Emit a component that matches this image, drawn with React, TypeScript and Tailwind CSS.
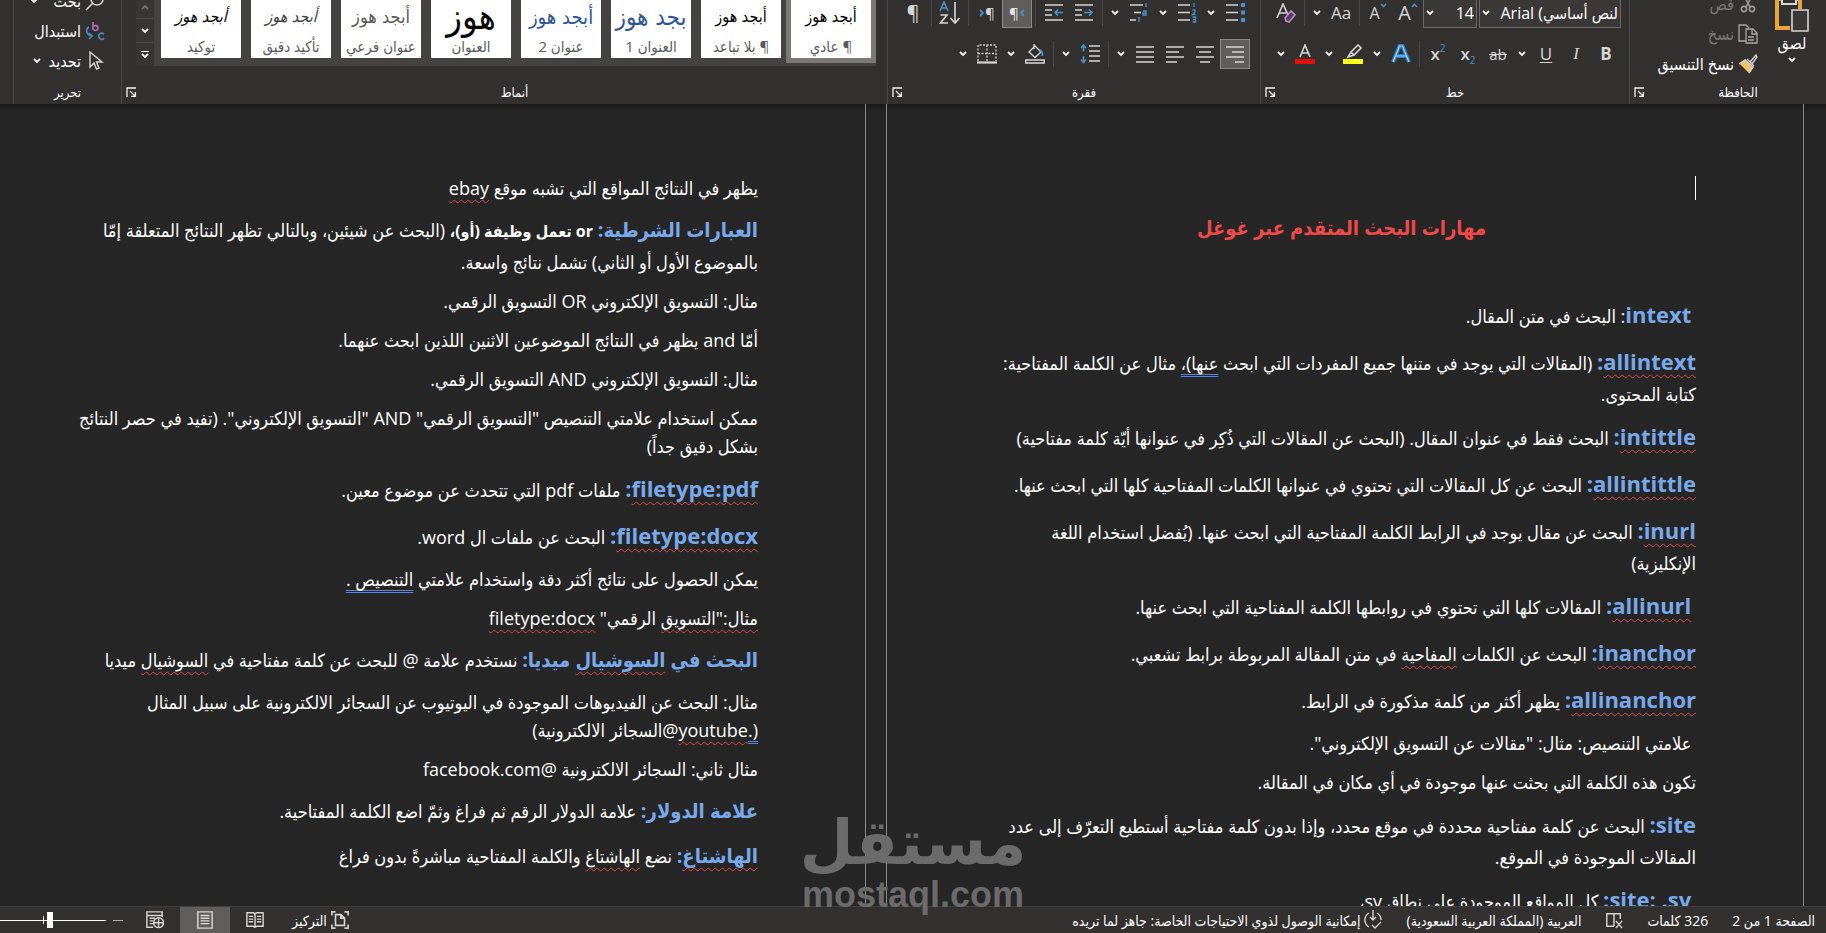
import type { ReactNode } from 'react'

const ui = 'font-["Open_Sans","DejaVu_Sans_Condensed",sans-serif]'

function Chevron({ className = '' }: { className?: string }) {
  return (
    <svg width="8" height="6" viewBox="0 0 8 6" fill="none" stroke="#f3f3f3" strokeWidth="1.8" className={`shrink-0 ${className}`}>
      <path d="M1 1l3 3 3-3" />
    </svg>
  )
}

function Drop({ label }: { label: string }) {
  return (
    <button aria-label={label} className="flex h-[30px] w-[18px] items-center justify-center">
      <Chevron />
    </button>
  )
}

function Tool({ label, active, children }: { label: string; active?: boolean; children: ReactNode }) {
  return (
    <button
      aria-label={label}
      className={
        active
          ? 'flex h-[30px] w-[30px] items-center justify-center border border-[#8a8a8a] bg-[#5f5e5c]'
          : 'flex h-[30px] w-[30px] items-center justify-center'
      }
    >
      {children}
    </button>
  )
}

function Sep() {
  return <div className="mx-[3px] h-[26px] w-px bg-[#4a4947]" />
}

function Svg({ children, size = 20 }: { children: ReactNode; size?: number }) {
  return (
    <svg width={size} height={size} viewBox="0 0 20 20" fill="none" stroke="#d6d6d6" strokeWidth="1.6" className="shrink-0">
      {children}
    </svg>
  )
}

function GroupFooter({ title, launcher = true }: { title: string; launcher?: boolean }) {
  return (
    <div dir="ltr" className="mb-[2px] flex h-5 shrink-0 items-center">
      {launcher && (
        <button aria-label={`خيارات ${title}`} className="w-5 px-1">
          <svg width="11" height="11" viewBox="0 0 11 11" fill="none" stroke="#f3f3f3" strokeWidth="1.3">
            <path d="M1 10V1h9M4 4l5 5M9.4 5v4.4H5" />
          </svg>
        </button>
      )}
      <span className="flex-1 text-center text-[13px] leading-5 text-white">{title}</span>
    </div>
  )
}

const alignIcons = {
  right: 'M1 3h18M7 8h12M1 13h18M10 18h9',
  center: 'M1 3h18M4 8h12M1 13h18M5 18h10',
  left: 'M1 3h18M1 8h13M1 13h18M1 18h11',
  justify: 'M1 3h18M1 8h18M1 13h18M1 18h18',
}

function AlignIcon({ kind }: { kind: keyof typeof alignIcons }) {
  return (
    <Svg>
      <path d={alignIcons[kind]} />
    </Svg>
  )
}

function Clipboard() {
  return (
    <section className="flex w-[197px] flex-col justify-end border-l border-[#4a4947]">
      <div className="flex shrink-0 items-end gap-4 pr-4 pb-[3px]">
        <button className="flex flex-col items-center text-[16px] leading-5 text-white">
          <svg width="36" height="40" viewBox="0 0 36 40" fill="none">
            <path d="M3 4v31h13M26 4v12" stroke="#e8a33d" strokeWidth="4" />
            <path d="M3 6h23" stroke="#e8a33d" strokeWidth="4" />
            <path d="M8 2h14v9H8z" fill="#323130" stroke="#d6d6d6" strokeWidth="2" />
            <path d="M18 17h16v21H18z" fill="#3b3a39" stroke="#d6d6d6" strokeWidth="1.6" />
          </svg>
          لصق
          <Chevron className="mt-1 mb-4" />
        </button>
        <div className="flex flex-col text-[16px] whitespace-nowrap">
          <button className="flex h-[30px] items-center gap-1 text-[#7b7a78]">
            <Svg>
              <path d="M5 0l7 13M15 0L8 13" stroke="#9a9a9a" />
              <circle cx="6" cy="15" r="2.6" stroke="#9a9a9a" />
              <circle cx="14" cy="15" r="2.6" stroke="#9a9a9a" />
            </Svg>
            قص
          </button>
          <button className="flex h-[30px] items-center gap-1 text-[#7b7a78]">
            <Svg>
              <path d="M8 17H1V1h7l3 3M8 5h7l4 4v10H8zM14 5v5h5M10 13h6M10 16h6" stroke="#a8a8a8" strokeWidth="1.3" />
            </Svg>
            نسخ
          </button>
          <button className="flex h-[30px] items-center gap-1 text-white">
            <Svg>
              <path d="M3 10l8 8 3-4-7-7z" fill="#f0c36a" stroke="#f0c36a" />
              <path d="M1 10l6-4 8 7-4 6M9 5l7 7M12 8l6-7 1 2-5 7" strokeWidth="1.4" />
            </Svg>
            نسخ التنسيق
          </button>
        </div>
      </div>
      <GroupFooter title="الحافظة" />
    </section>
  )
}

function FontGroup() {
  return (
    <section className="flex w-[369px] flex-col justify-end border-l border-[#4a4947]">
      <div dir="ltr" className="flex shrink-0 flex-col gap-[11px] pr-2 pb-[13px]">
        <div className="flex h-[30px] items-center justify-end">
          <Tool label="مسح التنسيق">
            <Svg>
              <path d="M1 15L7 1l5 11M3 10h7" />
              <path d="M9 15l6-7 4 4-6 7-3-1z" fill="#5d3a63" stroke="#c08ac9" />
            </Svg>
          </Tool>
          <Sep />
          <Drop label="خيارات حالة الأحرف" />
          <Tool label="تغيير حالة الأحرف">
            <span className="text-[17px] text-[#d6d6d6]">Aa</span>
          </Tool>
          <Sep />
          <Tool label="تصغير الخط">
            <span className="text-[16px] text-[#d6d6d6]">A</span>
            <svg width="7" height="5" viewBox="0 0 7 5" fill="none" stroke="#4a90c8" strokeWidth="1.6" className="mb-4">
              <path d="M1 1l2.500 2.500L6 1" />
            </svg>
          </Tool>
          <Tool label="تكبير الخط">
            <span className="text-[20px] text-[#d6d6d6]">A</span>
            <svg width="7" height="5" viewBox="0 0 7 5" fill="none" stroke="#4a90c8" strokeWidth="1.6" className="mb-4">
              <path d="M1 4l2.500-2.500L6 4" />
            </svg>
          </Tool>
          <div className="flex h-[30px] w-[54px] items-center border border-[#6b6a68] bg-[#3a3938] px-[2px]">
            <Chevron />
            <select aria-label="حجم الخط" className="min-w-0 flex-1 appearance-none text-right text-[16px] text-white">
              <option>14</option>
            </select>
          </div>
          <div className="ml-[2px] flex h-[30px] w-[142px] items-center border border-[#6b6a68] bg-[#3a3938] px-[2px]">
            <Chevron />
            <select aria-label="الخط" className="min-w-0 flex-1 appearance-none text-right text-[16px] text-white">
              <option>Arial (لنص أساسي</option>
            </select>
          </div>
        </div>
        <div className="flex h-[30px] items-center justify-end text-[17px] text-[#d6d6d6]">
          <Drop label="ألوان الخط" />
          <Tool label="لون الخط">
            <Svg>
              <path d="M5 13l5-12 5 12M7 9h6" />
              <path d="M0 17.500h20" stroke="#e01010" strokeWidth="5" />
            </Svg>
          </Tool>
          <Drop label="ألوان التمييز" />
          <Tool label="لون تمييز النص">
            <Svg>
              <path d="M8 8l7-7 3 3-7 7zM8 8l-3 5 6-2" />
              <path d="M0 17.500h20" stroke="#ffff1e" strokeWidth="5" />
            </Svg>
          </Tool>
          <Drop label="خيارات التأثيرات" />
          <Tool label="تأثيرات النص">
            <Svg>
              <path d="M2 18L8.500 2h3L18 18M5 12h10" stroke="#2f7fc4" strokeWidth="4" />
              <path d="M2 18L8.500 2h3L18 18M5 12h10" stroke="#a6d0f2" strokeWidth="1.2" />
            </Svg>
          </Tool>
          <Sep />
          <Tool label="مرتفع">
            <span className="font-semibold">x</span>
            <span className="mb-3 text-[10px] text-[#4a90c8]">2</span>
          </Tool>
          <Tool label="منخفض">
            <span className="font-semibold">x</span>
            <span className="mt-3 text-[10px] text-[#4a90c8]">2</span>
          </Tool>
          <Tool label="يتوسطه خط">
            <span className="text-[15px] line-through">ab</span>
          </Tool>
          <Drop label="أنماط التسطير" />
          <Tool label="تسطير">
            <span className="underline underline-offset-2">U</span>
          </Tool>
          <Tool label="مائل">
            <span className="font-['Liberation_Serif',serif] italic">I</span>
          </Tool>
          <Tool label="غامق">
            <span className="font-bold">B</span>
          </Tool>
        </div>
      </div>
      <GroupFooter title="خط" />
    </section>
  )
}

function ParagraphGroup() {
  return (
    <section className="flex w-[373px] flex-col justify-end border-l border-[#4a4947]">
      <div dir="ltr" className="flex shrink-0 flex-col gap-[11px] pr-[10px] pb-[13px]">
        <div className="flex h-[30px] items-center justify-end">
          <Tool label="إظهار علامات الفقرات">
            <span className="text-[20px] text-[#d6d6d6]">¶</span>
          </Tool>
          <Sep />
          <Tool label="فرز">
            <svg width="22" height="24" viewBox="0 0 22 24" fill="none" stroke="#d6d6d6" strokeWidth="1.6">
              <path d="M1 10L5 1l4 9M2.500 7h5" stroke="#4a90c8" />
              <path d="M1.500 14h6.500L1.500 22H9M16 1v20M11.500 17l4.500 5 4.500-5" />
            </svg>
          </Tool>
          <Sep />
          <Tool label="من اليسار إلى اليمين">
            <svg width="6" height="8" viewBox="0 0 6 8" fill="none" stroke="#4a90c8" strokeWidth="1.8">
              <path d="M1 1l3 3-3 3" />
            </svg>
            <span className="text-[15px] text-[#d6d6d6]">¶</span>
          </Tool>
          <Tool label="من اليمين إلى اليسار" active>
            <span className="text-[15px] text-[#e6e6e6]">¶</span>
            <svg width="6" height="8" viewBox="0 0 6 8" fill="none" stroke="#4a90c8" strokeWidth="1.8">
              <path d="M5 1L2 4l3 3" />
            </svg>
          </Tool>
          <Sep />
          <Tool label="إنقاص المسافة البادئة">
            <Svg>
              <path d="M1 2h18M1 7h7M1 12h7M1 17h18" />
              <path d="M19 9.500h-8M14 6.500l-3 3 3 3" stroke="#4a90c8" />
            </Svg>
          </Tool>
          <Tool label="زيادة المسافة البادئة">
            <Svg>
              <path d="M1 2h18M1 7h7M1 12h7M1 17h18" />
              <path d="M10 9.500h8M15 6.500l3 3-3 3" stroke="#4a90c8" />
            </Svg>
          </Tool>
          <Sep />
          <Drop label="قائمة متعددة المستويات" />
          <Tool label="متعدد المستويات">
            <Svg>
              <path d="M1 2h13M5 9.500h7M1 17h6" />
              <path d="M17 0v4M14 8h3v4h-3v-2h3M10 14v5" stroke="#4a90c8" strokeWidth="1.400" />
            </Svg>
          </Tool>
          <Drop label="أنماط الترقيم" />
          <Tool label="ترقيم">
            <Svg>
              <path d="M1 2h12M1 9.500h12M1 17h12" />
              <path d="M17 0v4M15.500 7h2.500v2l-2.500 2.500h3M15.500 14h3v5h-3M16 16.500h2" stroke="#4a90c8" strokeWidth="1.300" />
            </Svg>
          </Tool>
          <Drop label="أنماط التعداد" />
          <Tool label="تعداد نقطي">
            <Svg>
              <path d="M1 2h12M1 9.500h12M1 17h12" />
              <path d="M16 0h4v4h-4zM16 7.500h4v4h-4zM16 15h4v4h-4z" fill="#4a90c8" stroke="none" />
            </Svg>
          </Tool>
        </div>
        <div className="flex h-[30px] items-center justify-end">
          <Drop label="أنماط الحدود" />
          <Tool label="حدود">
            <Svg>
              <path d="M1 17V1h18v16M10 1v16M1 9.500h18" strokeDasharray="2 1.500" strokeWidth="1.300" />
              <path d="M0 18.500h20" strokeWidth="2.200" />
            </Svg>
          </Tool>
          <Drop label="ألوان التظليل" />
          <Tool label="تظليل">
            <Svg>
              <path d="M4 8l6-6 6 6-6 5.500zM9 0v5M0.800 16h18.400v3H0.800z" strokeWidth="1.400" />
              <path d="M15 6c2 1 2.500 3 2.500 6" stroke="#4a90c8" strokeWidth="2" />
            </Svg>
          </Tool>
          <Sep />
          <Drop label="خيارات التباعد" />
          <Tool label="تباعد الأسطر">
            <Svg>
              <path d="M9 2h11M9 7h11M9 12h11M9 17h11" />
              <path d="M3.500 1.500v6M1 4l2.500-3L6 4M3.500 18v-6M1 15.500l2.500 3 2.500-3" stroke="#4a90c8" />
            </Svg>
          </Tool>
          <Sep />
          <Drop label="خيارات الضبط" />
          <Tool label="ضبط">
            <AlignIcon kind="justify" />
          </Tool>
          <Tool label="محاذاة إلى اليسار">
            <AlignIcon kind="left" />
          </Tool>
          <Tool label="توسيط">
            <AlignIcon kind="center" />
          </Tool>
          <Tool label="محاذاة إلى اليمين" active>
            <AlignIcon kind="right" />
          </Tool>
        </div>
      </div>
      <GroupFooter title="فقرة" />
    </section>
  )
}

const styleCards = [
  { name: '¶ عادي', sample: 'أبجد هوز', look: 'text-[16px] text-black', selected: true },
  { name: '¶ بلا تباعد', sample: 'أبجد هوز', look: 'text-[16px] text-black' },
  { name: 'العنوان 1', sample: 'بجد هوز', look: 'text-[24px] text-[#2f5496]' },
  { name: 'عنوان 2', sample: 'أبجد هوز', look: 'text-[20px] text-[#2f5496]' },
  { name: 'العنوان', sample: 'هوز', look: 'text-[36px] text-black' },
  { name: 'عنوان فرعي', sample: 'أبجد هوز', look: 'text-[18px] text-[#5a5a5a]' },
  { name: 'تأكيد دقيق', sample: 'أبجد هوز', look: 'text-[16px] italic text-[#404040]' },
  { name: 'توكيد', sample: 'أبجد هوز', look: 'text-[16px] italic text-black' },
]

function StylesGroup() {
  return (
    <section className="flex min-w-0 flex-1 flex-col justify-end border-l border-[#4a4947]">
      <div className="mr-[11px] mb-4 ml-[14px] flex h-[70px] shrink-0 bg-[#444342]">
        <div className="flex flex-1 items-end pb-[3px]">
          {styleCards.map((card) => (
            <button
              key={card.name}
              className={
                card.selected
                  ? 'flex h-[70px] w-[90px] flex-col border-[5px] border-[#7a7978] bg-white'
                  : 'flex h-[70px] w-[90px] flex-col border-[5px] border-transparent bg-white bg-clip-padding'
              }
            >
              <span
                className={`flex h-[38px] w-full items-center justify-center font-["DejaVu_Sans_Condensed",sans-serif] leading-none whitespace-nowrap ${card.look}`}
              >
                {card.sample}
              </span>
              <span className="h-[22px] w-full text-center text-[15px] leading-5 whitespace-nowrap text-[#5a5a5a]">
                {card.name}
              </span>
            </button>
          ))}
        </div>
        <div className="flex w-[18px] flex-col justify-end gap-px bg-[#4a4947]">
          <button aria-label="السابق" className="flex h-[22px] items-center justify-center bg-[#373635]">
            <Chevron className="rotate-180 opacity-30" />
          </button>
          <button aria-label="التالي" className="flex h-[23px] items-center justify-center bg-[#373635]">
            <Chevron />
          </button>
          <button aria-label="المزيد" className="flex h-[23px] flex-col items-center justify-center gap-px bg-[#373635]">
            <span className="h-px w-2 bg-white" />
            <Chevron />
          </button>
        </div>
      </div>
      <GroupFooter title="أنماط" />
    </section>
  )
}

function EditingGroup() {
  return (
    <section className="flex w-[108px] flex-col justify-end border-l border-[#4a4947]">
      <div className="flex shrink-0 flex-col pr-4 pb-[6px] text-[16px] whitespace-nowrap text-white">
        <button className="flex h-[30px] items-center gap-1">
          <Svg>
            <circle cx="12" cy="8" r="6" />
            <path d="M8 12l-7 7" />
          </Svg>
          بحث
          <Chevron className="mr-3" />
        </button>
        <button className="flex h-[30px] items-center gap-1">
          <Svg>
            <path d="M8 1v8M8 6c1-2 5-2 5 1s-4 3-5 1" stroke="#b06fbc" />
            <path d="M19 13c-3-2-6 0-5 3s4 3 5 1M4 6c-4 2-3 8 3 9M4 12l3 3-3 3" stroke="#4a90c8" />
          </Svg>
          استبدال
        </button>
        <button className="flex h-[30px] items-center gap-1">
          <Svg>
            <path d="M5 1v15l4-4 2.500 6 2.500-1-2.500-6H17z" strokeWidth="1.400" />
          </Svg>
          تحديد
          <Chevron className="mr-1" />
        </button>
      </div>
      <GroupFooter title="تحرير" launcher={false} />
    </section>
  )
}

function Line({ big, children }: { big?: boolean; children: ReactNode }) {
  return <span className={big ? 'block leading-[34px] whitespace-nowrap' : 'block leading-[28px] whitespace-nowrap'}>{children}</span>
}

function Key({ children }: { children: ReactNode }) {
  return <strong className="text-[22px] font-bold text-[#78a9ea]">{children}</strong>
}

function ArabicKey({ children }: { children: ReactNode }) {
  return <strong className="text-[20px] font-bold text-[#78a9ea]">{children}</strong>
}

function Spell({ children }: { children: ReactNode }) {
  return (
    <span className="underline decoration-[#d9484a] decoration-wavy decoration-1 underline-offset-4 [text-decoration-skip-ink:none]">
      {children}
    </span>
  )
}

function Grammar({ children }: { children: ReactNode }) {
  return (
    <span className="underline decoration-[#5b84e0] decoration-double decoration-1 underline-offset-4 [text-decoration-skip-ink:none]">
      {children}
    </span>
  )
}

function FirstPage() {
  return (
    <article className="w-[918px] shrink-0 border-x border-[#8a8a8a] pt-[72px] pr-[107px] pl-[100px]">
      <div className="h-6 border-r border-white" />
      <h1 className="mt-3 text-center text-[20px] leading-8 font-bold text-[#f04a4a]">مهارات البحث المتقدم عبر غوغل</h1>
      <div className="mt-[53px] flex flex-col gap-[11px]">
        <p>
          <Line big>
            &nbsp;<Key>intext</Key>: البحث في متن المقال.
          </Line>
        </p>
        <p>
          <Line big>
            <Key><Spell>allintext</Spell>:</Key> (المقالات التي يوجد في متنها جميع المفردات التي ابحث <Grammar>عنها)،</Grammar> مثال عن
            الكلمة المفتاحية:
          </Line>
          <Line>كتابة المحتوى.</Line>
        </p>
        <p>
          <Line big>
            <Key><Spell>intittle</Spell>:</Key> البحث فقط في عنوان المقال. (البحث عن المقالات التي ذُكِر في عنوانها أيّة كلمة مفتاحية)
          </Line>
        </p>
        <p>
          <Line big>
            <Key><Spell>allintittle</Spell>:</Key> البحث عن كل المقالات التي تحتوي في عنوانها الكلمات المفتاحية كلها التي ابحث عنها.
          </Line>
        </p>
        <p>
          <Line big>
            <Key><Spell>inurl</Spell>:</Key> البحث عن مقال يوجد في الرابط الكلمة المفتاحية التي ابحث عنها. (يُفضل استخدام اللغة
          </Line>
          <Line>الإنكليزية)</Line>
        </p>
        <p>
          <Line big>
            &nbsp;<Key><Spell>allinurl</Spell>:</Key> المقالات كلها التي تحتوي في روابطها الكلمة المفتاحية التي ابحث عنها.
          </Line>
        </p>
        <p>
          <Line big>
            <Key><Spell>inanchor</Spell>:</Key> البحث عن الكلمات <Spell>المفاحية</Spell> في متن المقالة المربوطة برابط تشعبي.
          </Line>
        </p>
        <p>
          <Line big>
            <Key><Spell>allinanchor</Spell>:</Key> يظهر أكثر من كلمة مذكورة في الرابط.
          </Line>
        </p>
        <p>
          <Line>&nbsp;علامتي التنصيص: مثال: "مقالات عن التسويق الإلكتروني".</Line>
        </p>
        <p>
          <Line>تكون هذه الكلمة التي بحثت عنها موجودة في أي مكان في المقالة.</Line>
        </p>
        <p>
          <Line big>
            <Key>site:</Key> البحث عن كلمة مفتاحية محددة في موقع محدد، وإذا بدون كلمة مفتاحية أستطيع التعرّف إلى عدد
          </Line>
          <Line>المقالات الموجودة في الموقع.</Line>
        </p>
        <p>
          <Line big>
            &nbsp;<Key><bdi dir="ltr">site: .sv</bdi>:</Key> كل المواقع الموجودة على نطاق sv،
          </Line>
        </p>
      </div>
    </article>
  )
}

function SecondPage() {
  return (
    <article className="flex min-w-0 flex-1 flex-col gap-[11px] border-r border-[#8a8a8a] pt-[70px] pr-[107px]">
      <p>
        <Line>
          يظهر في النتائج المواقع التي تشبه موقع <Spell>ebay</Spell>
        </Line>
      </p>
      <p>
        <Line big>
          <ArabicKey>العبارات الشرطية:</ArabicKey> <b className="text-[16px]">or تعمل وظيفة (أو)،</b> (البحث عن شيئين، وبالتالي تظهر النتائج
          المتعلقة إمّا
        </Line>
        <Line>بالموضوع الأول أو الثاني) تشمل نتائج واسعة.</Line>
      </p>
      <p>
        <Line>مثال: التسويق الإلكتروني OR التسويق الرقمي.</Line>
      </p>
      <p>
        <Line>أمّا and يظهر في النتائج الموضوعين الاثنين اللذين ابحث عنهما.</Line>
      </p>
      <p>
        <Line>مثال: التسويق الإلكتروني AND التسويق الرقمي.</Line>
      </p>
      <p>
        <Line>ممكن استخدام علامتي التنصيص "التسويق الرقمي" AND "التسويق الإلكتروني". (تفيد في حصر النتائج</Line>
        <Line>بشكل دقيق جداً)</Line>
      </p>
      <p>
        <Line big>
          <Key><Spell>filetype:pdf</Spell>:</Key> ملفات pdf التي تتحدث عن موضوع معين.
        </Line>
      </p>
      <p>
        <Line big>
          <Key><Spell>filetype:docx</Spell>:</Key> البحث عن ملفات ال word.
        </Line>
      </p>
      <p>
        <Line>
          يمكن الحصول على نتائج أكثر دقة واستخدام علامتي <Grammar>التنصيص .</Grammar>
        </Line>
      </p>
      <p>
        <Line>
          <Spell>مثال:"التسويق</Spell> الرقمي" <Spell>filetype:docx</Spell>
        </Line>
      </p>
      <p>
        <Line big>
          <ArabicKey>البحث في <Spell>السوشيال</Spell> ميديا:</ArabicKey> نستخدم علامة @ للبحث عن كلمة مفتاحية في <Spell>السوشيال</Spell>{' '}
          ميديا
        </Line>
      </p>
      <p>
        <Line>مثال: البحث عن الفيديوهات الموجودة في اليوتيوب عن السجائر الالكترونية على سبيل المثال</Line>
        <Line>
          <Grammar>(.</Grammar><Spell>youtube</Spell>@السجائر الالكترونية)
        </Line>
      </p>
      <p>
        <Line>مثال ثاني: السجائر الالكترونية @facebook.com</Line>
      </p>
      <p>
        <Line big>
          <ArabicKey>علامة الدولار:</ArabicKey> علامة الدولار الرقم ثم فراغ وثمّ اضع الكلمة المفتاحية.
        </Line>
      </p>
      <p>
        <Line big>
          <ArabicKey><Spell>الهاشتاغ</Spell>:</ArabicKey> نضع <Spell>الهاشتاغ</Spell> والكلمة المفتاحية مباشرةً بدون فراغ
        </Line>
      </p>
    </article>
  )
}

function StatusBar() {
  return (
    <footer className="flex h-[27px] shrink-0 items-center border-t border-[#41403f] bg-[#323130] pr-[11px] text-[14px] whitespace-nowrap text-white">
      <span>الصفحة 1 من 2</span>
      <span className="mr-6">326 كلمات</span>
      <button aria-label="تدقيق" className="mr-6">
        <Svg size={18}>
          <path d="M10 3v14M10 3H2v14h8M10 3h7v6M12 11l7 8M19 11l-7 8" />
        </Svg>
      </button>
      <span className="mr-6">العربية (المملكة العربية السعودية)</span>
      <button className="mr-6 flex items-center gap-[2px]">
        <Svg>
          <path d="M6 3a8 8 0 000 14M14 3a8 8 0 014 7M10 0v10M7 7l3 3 3-3M9 15l3 3 6-6" strokeWidth="1.400" />
        </Svg>
        إمكانية الوصول لذوي الاحتياجات الخاصة: جاهز لما تريده
      </button>
      <div className="mr-auto flex h-full items-center">
        <button className="flex items-center gap-1">
          <Svg size={18}>
            <path d="M1 5V1h4M15 1h4v4M1 15v4h4M15 19h4v-4M5 4h6l4 4v8H5zM11 4v4h4" strokeWidth="1.800" />
          </Svg>
          التركيز
        </button>
        <button aria-label="وضع القراءة" className="mr-3 flex h-full w-[50px] items-center justify-center">
          <Svg size={18}>
            <path d="M10 3v15M1 2h7l2 1 2-1h7v15h-7l-2 1-2-1H1zM3 6h5M3 9h5M3 12h5M12 6h5M12 9h5M12 12h5" />
          </Svg>
        </button>
        <button aria-label="تخطيط الطباعة" className="flex h-full w-[50px] items-center justify-center bg-[#5f5e5c]">
          <Svg size={18}>
            <path d="M2 1h16v18H2zM5 5h10M5 8h10M5 11h10M5 14h10" />
          </Svg>
        </button>
        <button aria-label="تخطيط ويب" className="flex h-full w-[50px] items-center justify-center">
          <Svg size={18}>
            <path d="M8 18H1V1h17v6M1 5h17M4 8h6M4 11h4M4 14h4" />
            <circle cx="14" cy="13" r="5.500" />
            <path d="M8.500 13h11M14 7.500v11" />
          </Svg>
        </button>
        <button aria-label="تصغير" className="flex h-full w-6 items-center justify-center">
          <span className="h-px w-[10px] bg-[#b0b0b0]" />
        </button>
        <input
          type="range"
          dir="ltr"
          aria-label="تكبير أو تصغير"
          defaultValue={47}
          className="h-4 w-[106px] appearance-none bg-[linear-gradient(white,white),linear-gradient(white,white)] bg-[length:100%_1px,1px_8px] bg-[position:center,43px_center] bg-no-repeat [&::-webkit-slider-thumb]:h-4 [&::-webkit-slider-thumb]:w-[6px] [&::-webkit-slider-thumb]:appearance-none [&::-webkit-slider-thumb]:bg-white"
        />
      </div>
    </footer>
  )
}

export default function App() {
  return (
    <div dir="rtl" className={`relative flex h-screen flex-col overflow-hidden bg-[#262626] ${ui}`}>
      <header className="flex h-[104px] shrink-0 items-stretch overflow-hidden bg-[#323130]">
        <Clipboard />
        <FontGroup />
        <ParagraphGroup />
        <StylesGroup />
        <EditingGroup />
        <div className="w-[13px]" />
      </header>
      <main className="flex min-h-0 flex-1 overflow-hidden bg-[linear-gradient(#1b1a19,#262626_8px)] pr-[22px] text-[18px] text-white">
        <FirstPage />
        <div className="w-5 shrink-0" />
        <SecondPage />
      </main>
      <StatusBar />
      <div className="pointer-events-none absolute bottom-5 left-[803px] flex w-[220px] flex-col items-center text-[#6b6b6b]">
        <span className="font-['DejaVu_Sans',sans-serif] text-[62px] leading-[68px] font-bold">مستقل</span>
        <span dir="ltr" className="font-['Liberation_Sans',sans-serif] text-[36px] leading-9 font-bold">mostaql.com</span>
      </div>
    </div>
  )
}
